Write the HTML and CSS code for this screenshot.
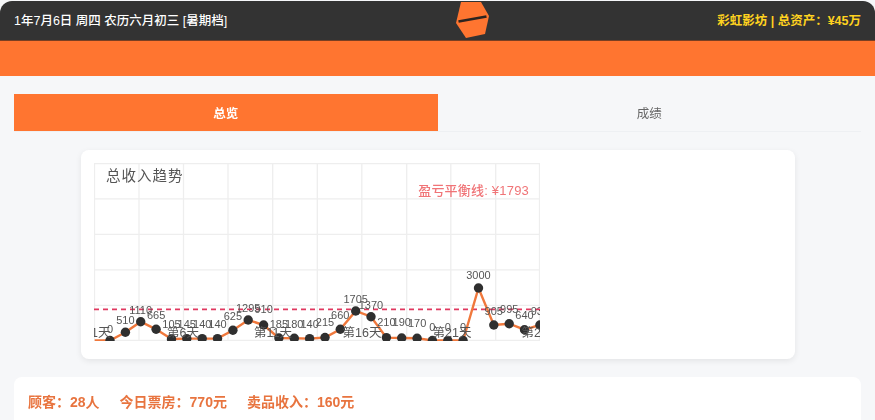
FILE: index.html
```html
<!DOCTYPE html>
<html lang="zh-CN">
<head>
<meta charset="utf-8">
<title>彩虹影坊</title>
<link rel="stylesheet" href="styles.css">
</head>
<body>
<div class="page">
  <header class="topbar">
    <span class="date">1年7月6日 周四 农历六月初三 [暑期档]</span>
    <svg class="logo" width="36" height="38" viewBox="0 0 36 38" aria-hidden="true">
      <polygon class="logo-hex" points="6,1 26,1 34,15 30,33 11,37 1,22"/>
      <line class="logo-bar" x1="3.5" y1="20.5" x2="31.5" y2="15.5"/>
    </svg>
    <span class="assets">彩虹影坊 | 总资产：¥45万</span>
  </header>
  <div class="band"></div>
  <main class="content">
    <nav class="tabs">
      <div class="tab tab-active">总览</div>
      <div class="tab">成绩</div>
    </nav>
    <section class="chart-card">
      <svg class="chart" width="446" height="178" viewBox="0 0 446 178">
        <g class="grid">
          <line x1="0.5" y1="0" x2="0.5" y2="178"/>
          <line x1="45" y1="0" x2="45" y2="178"/>
          <line x1="89.5" y1="0" x2="89.5" y2="178"/>
          <line x1="134" y1="0" x2="134" y2="178"/>
          <line x1="178.7" y1="0" x2="178.7" y2="178"/>
          <line x1="223.3" y1="0" x2="223.3" y2="178"/>
          <line x1="267.8" y1="0" x2="267.8" y2="178"/>
          <line x1="312.7" y1="0" x2="312.7" y2="178"/>
          <line x1="356.8" y1="0" x2="356.8" y2="178"/>
          <line x1="401.7" y1="0" x2="401.7" y2="178"/>
          <line x1="445.5" y1="0" x2="445.5" y2="178"/>
          <line x1="0" y1="0.5" x2="446" y2="0.5"/>
          <line x1="0" y1="35.8" x2="446" y2="35.8"/>
          <line x1="0" y1="71.3" x2="446" y2="71.3"/>
          <line x1="0" y1="106.8" x2="446" y2="106.8"/>
          <line x1="0" y1="142.3" x2="446" y2="142.3"/>
          <line x1="0" y1="177.5" x2="446" y2="177.5"/>
        </g>
        <text class="chart-title" x="12" y="18">总收入趋势</text>
        <text class="break-even" x="435" y="32" text-anchor="end">盈亏平衡线: ¥1793</text>
        <line class="break-line" x1="0" y1="146.4" x2="446" y2="146.4"/>
        <polyline class="trend" points="0.7,177.5 16,177.5 31.4,169.3 46.7,158.7 62.1,166.3 77.5,176 92.8,175.6 108.2,175.6 123.5,175.6 138.9,167.3 154.2,157 169.6,162 184.9,175 200.3,175.3 215.6,175.6 231,174.5 246.3,166.2 261.7,148 277,153.7 292.4,174.6 307.7,175 323.1,175.2 338.4,177.5 353.8,177.5 369.1,177.5 384.5,125 399.8,162 415.2,160.7 430.5,166.7 445.9,162"/>
        <g class="dots">
          <circle cx="16" cy="177.5" r="4.7"/><circle cx="31.4" cy="169.3" r="4.7"/><circle cx="46.7" cy="158.7" r="4.7"/><circle cx="62.1" cy="166.3" r="4.7"/><circle cx="77.5" cy="176" r="4.7"/><circle cx="92.8" cy="175.6" r="4.7"/><circle cx="108.2" cy="175.6" r="4.7"/><circle cx="123.5" cy="175.6" r="4.7"/><circle cx="138.9" cy="167.3" r="4.7"/><circle cx="154.2" cy="157" r="4.7"/><circle cx="169.6" cy="162" r="4.7"/><circle cx="184.9" cy="175" r="4.7"/><circle cx="200.3" cy="175.3" r="4.7"/><circle cx="215.6" cy="175.6" r="4.7"/><circle cx="231" cy="174.5" r="4.7"/><circle cx="246.3" cy="166.2" r="4.7"/><circle cx="261.7" cy="148" r="4.7"/><circle cx="277" cy="153.7" r="4.7"/><circle cx="292.4" cy="174.6" r="4.7"/><circle cx="307.7" cy="175" r="4.7"/><circle cx="323.1" cy="175.2" r="4.7"/><circle cx="338.4" cy="177.5" r="4.7"/><circle cx="353.8" cy="177.5" r="4.7"/><circle cx="369.1" cy="177.5" r="4.7"/><circle cx="384.5" cy="125" r="4.7"/><circle cx="399.8" cy="162" r="4.7"/><circle cx="415.2" cy="160.7" r="4.7"/><circle cx="430.5" cy="166.7" r="4.7"/><circle cx="445.9" cy="162" r="4.7"/>
        </g>
        <g class="axis-labels" text-anchor="middle">
          <text x="0.5" y="174">第1天</text>
          <text x="89" y="174">第6天</text>
          <text x="179" y="174">第11天</text>
          <text x="268" y="174">第16天</text>
          <text x="358" y="174">第21天</text>
          <text x="447" y="174">第26天</text>
        </g>
        <g class="values" text-anchor="middle">
          <text x="16" y="170">0</text><text x="31.4" y="160.5">510</text><text x="46.7" y="151">1110</text><text x="62.1" y="155.5">665</text><text x="77.5" y="165">105</text><text x="92.8" y="165">145</text><text x="108.2" y="165">140</text><text x="123.5" y="165">140</text><text x="138.9" y="156.5">625</text><text x="154.2" y="149">1295</text><text x="169.6" y="150">910</text><text x="184.9" y="165">185</text><text x="200.3" y="165">180</text><text x="215.6" y="165">140</text><text x="231" y="163">215</text><text x="246.3" y="156">660</text><text x="261.7" y="140">1705</text><text x="277" y="146">1370</text><text x="292.4" y="163">210</text><text x="307.7" y="163">190</text><text x="323.1" y="164">170</text><text x="338.4" y="168">0</text><text x="353.8" y="168">0</text><text x="369.1" y="168">0</text><text x="384.5" y="116">3000</text><text x="399.8" y="152">905</text><text x="415.2" y="150">995</text><text x="430.5" y="156">640</text><text x="445.9" y="152">930</text>
        </g>
      </svg>
    </section>
    <section class="summary">
      <span>顾客：28人</span>
      <span>今日票房：770元</span>
      <span>卖品收入：160元</span>
    </section>
  </main>
</div>
</body>
</html>
```
FILE: styles.css
```css
* { box-sizing: border-box; }
html, body {
  margin: 0;
  height: 420px;
  overflow: hidden;
  background: #f6f7f9;
}
body {
  font-family: "Liberation Sans", "Noto Sans CJK SC", sans-serif;
}
.page {
  height: 420px;
  overflow: hidden;
  padding-top: 1px;
  filter: blur(0.45px);
}
.topbar {
  height: 39px;
  display: flex;
  align-items: center;
  justify-content: space-between;
  padding: 0 14px 3px;
  background: #333333;
  border-radius: 12px 12px 0 0;
  font-size: 12.5px;
  position: relative;
}
.date { color: #ffffff; font-weight: 500; }
.assets { color: #ffd21f; font-weight: 700; }
.logo {
  position: absolute;
  left: 455px;
  top: 0;
}
.logo-hex { fill: #ff7530; }
.logo-bar { stroke: #2c2420; stroke-width: 2.6; }
.band {
  height: 36px;
  background: #ff7530;
  border-top: 1px solid #7a3f22;
}
.content { padding: 18px 14px 0; }
.tabs {
  display: flex;
  height: 38px;
  border-bottom: 1px solid #eef0f3;
}
.tab {
  flex: 1;
  display: flex;
  align-items: center;
  justify-content: center;
  font-size: 12.5px;
  color: #666666;
}
.tab-active {
  background: #ff7530;
  color: #ffffff;
  font-weight: 700;
}
.chart-card {
  width: 714px;
  height: 209px;
  margin: 18px auto 0;
  padding: 13px;
  background: #ffffff;
  border-radius: 8px;
  box-shadow: 0 2px 6px rgba(0, 0, 0, 0.08);
}
.chart { display: block; overflow: hidden; }
.grid line { stroke: #eeeeee; stroke-width: 1.3; }
.chart-title {
  font-size: 14.5px;
  letter-spacing: 1px;
  fill: #555555;
}
.break-even {
  font-size: 13px;
  letter-spacing: 0.2px;
  font-weight: 500;
  fill: #f07477;
}
.break-line {
  stroke: #e0385f;
  stroke-width: 1.7;
  stroke-dasharray: 5 4;
}
.trend {
  fill: none;
  stroke: #f0783c;
  stroke-width: 2.4;
}
.dots circle { fill: #2f2f2f; }
.axis-labels text {
  font-size: 12.5px;
  fill: #555555;
}
.values text {
  font-size: 11px;
  fill: #555555;
}
.summary {
  display: flex;
  gap: 20px;
  height: 80px;
  margin-top: 18px;
  padding: 14px 14px;
  background: #ffffff;
  border-radius: 8px;
  font-size: 14px;
  font-weight: 700;
  color: #e8743f;
}
```
